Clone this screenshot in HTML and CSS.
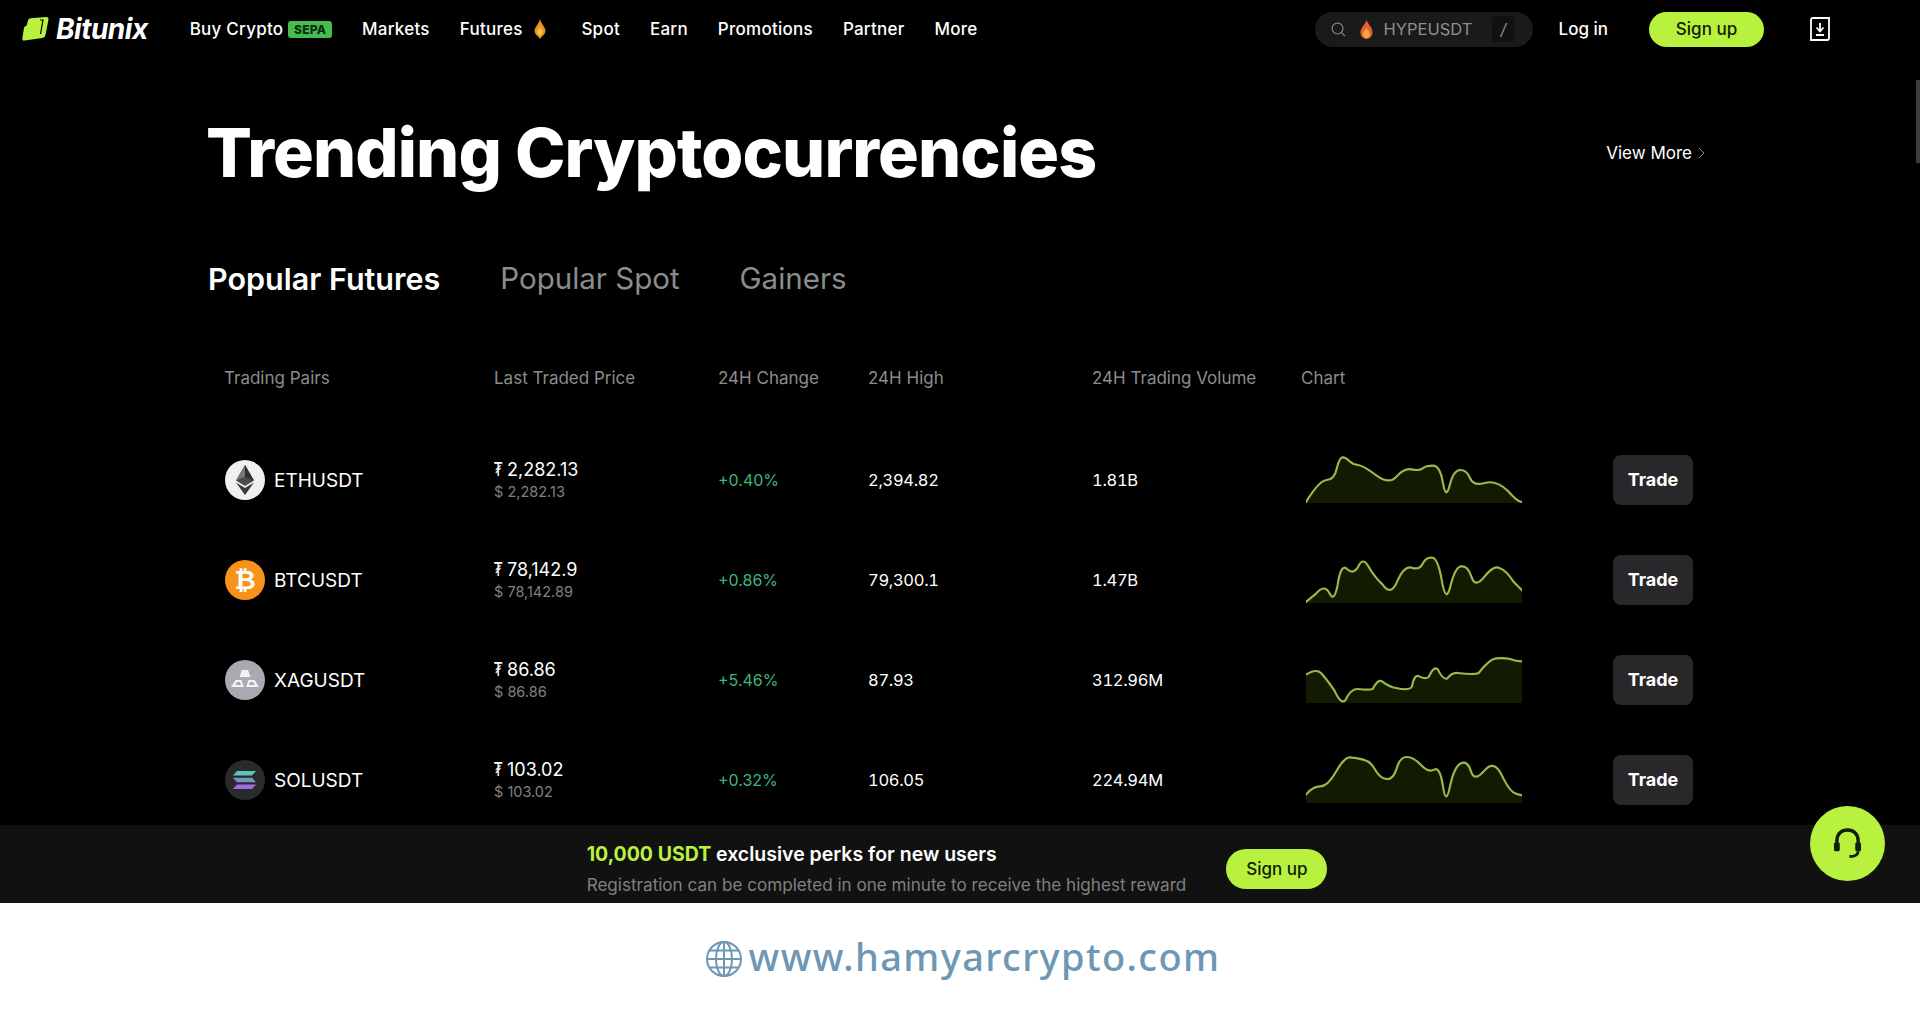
FILE: index.html
```html
<!DOCTYPE html>
<html lang="en">
<head>
<meta charset="utf-8">
<title>Bitunix - Trending Cryptocurrencies</title>
<link rel="stylesheet" href="styles.css">
</head>
<body>
<div class="shot">
  <header class="topbar">
    <a class="logo">
      <svg class="logo-mark" viewBox="0 0 27 24"><path d="M6 3.5 Q6.4 1.5 8.5 1.3 L24 0 Q27 0 26.4 3 L23.5 18 Q23 20.6 20.5 21 L2.5 23.6 Q0 24 .4 21 L2 11 Q2.3 9 4.5 8.7 Z" fill="#b9f13f"/><path d="M18 3 L21 3 L18.5 17" fill="none" stroke="#000" stroke-width="1.2"/></svg>
      <span class="logo-text">Bitunix</span>
    </a>
    <nav class="nav">
      <a class="nav-item">Buy Crypto <span class="sepa">SEPA</span></a>
      <a class="nav-item">Markets</a>
      <a class="nav-item">Futures <svg class="nav-flame" viewBox="0 0 16 22"><path d="M8 0 C9 5 14 9 14 13 C14 17 10 19 8 22 C6 19 2 17 2 13 C2 9 7 5 8 0 Z" fill="#e8941e"/><path d="M8 9 C9 11 11 12 11 14 C11 16 9 17 8 19 C7 17 5 16 5 14 C5 12 7 11 8 9 Z" fill="#f6c64a"/></svg></a>
      <a class="nav-item">Spot</a>
      <a class="nav-item">Earn</a>
      <a class="nav-item">Promotions</a>
      <a class="nav-item">Partner</a>
      <a class="nav-item">More</a>
    </nav>
    <div class="top-right">
      <div class="search">
        <svg class="search-icon" viewBox="0 0 16 16"><circle cx="7" cy="7" r="5.8" fill="none" stroke="#8a8a8a" stroke-width="1.2"/><path d="M11.300 11.300 L15 15" stroke="#8a8a8a" stroke-width="1.2"/></svg>
        <svg class="search-flame" viewBox="0 0 16 22"><path d="M8 0 C9 4 15 8 15 14 C15 19 12 22 8 22 C4 22 1 19 1 14 C1 9 7 5 8 0 Z" fill="#e2622a"/><path d="M8 9 C9 12 12 13 12 16 C12 19 10 21 8 21 C6 21 4 19 4 16 C4 13 7 12 8 9 Z" fill="#f7a64a"/></svg>
        <span class="search-text">HYPEUSDT</span>
        <span class="search-key">/</span>
      </div>
      <a class="login">Log in</a>
      <a class="signup">Sign up</a>
      <svg class="download" viewBox="0 0 20 24"><path d="M1 3 Q1 1 3 1 H19 V21 Q19 23 17 23 H1 Z" fill="none" stroke="#fff" stroke-width="1.800"/><path d="M10 6 V14 M6.500 10.500 L10 14.500 L13.500 10.500 M6 18 H14" fill="none" stroke="#fff" stroke-width="1.800"/></svg>
    </div>
  </header>

  <main class="content">
    <div class="wrap">
      <div class="title-row">
        <h1 class="title">Trending Cryptocurrencies</h1>
        <a class="view-more">View More <svg class="chev" viewBox="0 0 7 12"><path d="M1 1 L6 6 L1 11" fill="none" stroke="#8a8a8a" stroke-width="1"/></svg></a>
      </div>
      <div class="tabs">
        <span class="tab tab-active">Popular Futures</span>
        <span class="tab">Popular Spot</span>
        <span class="tab">Gainers</span>
      </div>
      <div class="thead">
        <span>Trading Pairs</span>
        <span>Last Traded Price</span>
        <span>24H Change</span>
        <span>24H High</span>
        <span>24H Trading Volume</span>
        <span>Chart</span>
      </div>

      <div class="row">
        <div class="pair">
          <svg class="coin" viewBox="0 0 40 40"><circle cx="20" cy="20" r="20" fill="#eef0f1"/><path d="M20 5 L11 20.500 L20 26 L29 20.500 Z" fill="#4a4a4c"/><path d="M20 5 L11 20.500 L20 16.500 Z" fill="#77777a"/><path d="M20 5 L29 20.500 L20 16.500 Z" fill="#2e2e30"/><path d="M11 22.500 L20 35 L29 22.500 L20 28 Z" fill="#3a3a3c"/></svg>
          <span>ETHUSDT</span>
        </div>
        <div class="price"><div class="price-main"><span class="tether">₮</span>2,282.13</div><div class="price-sub">$ 2,282.13</div></div>
        <div class="up">+0.40%</div>
        <div class="val">2,394.82</div>
        <div class="val">1.81B</div>
        <svg class="spark" viewBox="0 0 648 150" preserveAspectRatio="none"><path class="spark-fill" d="M0 147 Q40 82 62 81 Q85 80 92 47 Q100 14 109 13 Q118 12 129 23 Q140 34 156 36 Q172 38 211 67 Q250 96 272 70 Q295 44 317 49 Q340 54 350 46 Q360 38 381 38 Q402 38 411 90 Q420 142 431 97 Q442 52 462 51 Q482 50 492 75 Q502 100 536 90 Q570 80 605 113 Q635 147 648 147 V150 H0 Z"/><path class="spark-line" d="M0 147 Q40 82 62 81 Q85 80 92 47 Q100 14 109 13 Q118 12 129 23 Q140 34 156 36 Q172 38 211 67 Q250 96 272 70 Q295 44 317 49 Q340 54 350 46 Q360 38 381 38 Q402 38 411 90 Q420 142 431 97 Q442 52 462 51 Q482 50 492 75 Q502 100 536 90 Q570 80 605 113 Q635 147 648 147"/></svg>
        <a class="trade">Trade</a>
      </div>

      <div class="row">
        <div class="pair">
          <svg class="coin" viewBox="0 0 40 40"><circle cx="20" cy="20" r="20" fill="#f7931a"/><text x="20" y="29" class="btc-glyph" text-anchor="middle">₿</text></svg>
          <span>BTCUSDT</span>
        </div>
        <div class="price"><div class="price-main"><span class="tether">₮</span>78,142.9</div><div class="price-sub">$ 78,142.89</div></div>
        <div class="up">+0.86%</div>
        <div class="val">79,300.1</div>
        <div class="val">1.47B</div>
        <svg class="spark" viewBox="0 0 648 150" preserveAspectRatio="none"><path class="spark-fill" d="M0 147 L30 122 Q55 92 70 120 Q85 150 95 95 Q105 30 123 48 Q142 66 156 42 Q170 10 187 40 Q205 72 230 95 Q255 132 275 82 Q295 38 317 44 Q340 52 350 32 Q360 12 378 14 Q395 14 407 80 Q420 160 435 92 Q450 38 467 40 Q485 38 496 70 Q507 108 536 70 Q565 34 582 46 Q600 52 624 88 L648 112 V150 H0 Z"/><path class="spark-line" d="M0 147 L30 122 Q55 92 70 120 Q85 150 95 95 Q105 30 123 48 Q142 66 156 42 Q170 10 187 40 Q205 72 230 95 Q255 132 275 82 Q295 38 317 44 Q340 52 350 32 Q360 12 378 14 Q395 14 407 80 Q420 160 435 92 Q450 38 467 40 Q485 38 496 70 Q507 108 536 70 Q565 34 582 46 Q600 52 624 88 L648 112"/></svg>
        <a class="trade">Trade</a>
      </div>

      <div class="row">
        <div class="pair">
          <svg class="coin" viewBox="0 0 40 40"><circle cx="20" cy="20" r="20" fill="#a9a9b1"/><path d="M17 10 H23 L25.500 17 H14.500 Z M10.500 20 H16.500 L19 27 H6 Z M23.500 20 H29.500 L34 27 H21 Z" fill="#f2f2f4"/><path d="M12 22 H15 L16 25 H10.500 Z M25 22 H28 L30 25 H24 Z" fill="#a9a9b1"/></svg>
          <span>XAGUSDT</span>
        </div>
        <div class="price"><div class="price-main"><span class="tether">₮</span>86.86</div><div class="price-sub">$ 86.86</div></div>
        <div class="up">+5.46%</div>
        <div class="val">87.93</div>
        <div class="val">312.96M</div>
        <svg class="spark" viewBox="0 0 648 150" preserveAspectRatio="none"><path class="spark-fill" d="M0 65 Q30 46 45 60 Q60 76 85 112 Q105 156 118 142 Q135 106 155 108 Q190 112 200 108 Q215 78 228 85 Q250 102 270 105 Q312 114 318 100 Q325 62 340 70 Q358 80 368 72 Q385 36 396 50 Q410 80 423 77 Q438 58 455 60 Q505 66 518 60 Q550 18 570 16 Q595 14 612 18 Q630 25 648 25 V150 H0 Z"/><path class="spark-line" d="M0 65 Q30 46 45 60 Q60 76 85 112 Q105 156 118 142 Q135 106 155 108 Q190 112 200 108 Q215 78 228 85 Q250 102 270 105 Q312 114 318 100 Q325 62 340 70 Q358 80 368 72 Q385 36 396 50 Q410 80 423 77 Q438 58 455 60 Q505 66 518 60 Q550 18 570 16 Q595 14 612 18 Q630 25 648 25"/></svg>
        <a class="trade">Trade</a>
      </div>

      <div class="row">
        <div class="pair">
          <svg class="coin" viewBox="0 0 40 40"><circle cx="20" cy="20" r="20" fill="#2a2a2c"/><path d="M12 11 H31 L27 15.500 H8 Z" fill="#5bc6b8"/><path d="M8 17.700 H27 L31 22.200 H12 Z" fill="#7d92c9"/><path d="M12 24.500 H31 L27 29 H8 Z" fill="#9d6fdc"/></svg>
          <span>SOLUSDT</span>
        </div>
        <div class="price"><div class="price-main"><span class="tether">₮</span>103.02</div><div class="price-sub">$ 103.02</div></div>
        <div class="up">+0.32%</div>
        <div class="val">106.05</div>
        <div class="val">224.94M</div>
        <svg class="spark" viewBox="0 0 648 150" preserveAspectRatio="none"><path class="spark-fill" d="M0 125 Q20 100 42.500 100 Q65 100 90 56 Q115 12 132 13 Q150 14 172 20 Q195 26 208 51 Q222 76 242 78 Q262 80 272 46 Q282 12 302 12 Q322 12 345 36 Q368 60 385 50 Q402 40 411 100 Q420 160 432 100 Q445 40 465 31 Q485 22 495 55 Q505 88 535 53 Q565 18 588 68 Q612 118 630 122 Q640 125 648 127 V150 H0 Z"/><path class="spark-line" d="M0 125 Q20 100 42.500 100 Q65 100 90 56 Q115 12 132 13 Q150 14 172 20 Q195 26 208 51 Q222 76 242 78 Q262 80 272 46 Q282 12 302 12 Q322 12 345 36 Q368 60 385 50 Q402 40 411 100 Q420 160 432 100 Q445 40 465 31 Q485 22 495 55 Q505 88 535 53 Q565 18 588 68 Q612 118 630 122 Q640 125 648 127"/></svg>
        <a class="trade">Trade</a>
      </div>
    </div>
    <div class="scrollbar"></div>
  </main>

  <aside class="banner">
    <div class="banner-copy">
      <div class="banner-title"><span class="lime">10,000 USDT</span> exclusive perks for new users</div>
      <div class="banner-sub">Registration can be completed in one minute to receive the highest reward</div>
    </div>
    <a class="banner-btn">Sign up</a>
  </aside>

  <a class="support">
    <svg class="support-icon" viewBox="0 0 30 32"><path d="M4 18 V13 C4 6 9 2 15 2 C21 2 26 6 26 13 V18" fill="none" stroke="#10210a" stroke-width="3.500"/><rect x="1" y="15" width="6" height="9" rx="1.500" fill="#10210a"/><rect x="23" y="15" width="6" height="9" rx="1.500" fill="#10210a"/><path d="M26 24 C26 28 23 29.500 17 29.500" fill="none" stroke="#10210a" stroke-width="3"/></svg>
  </a>

  <footer class="mark">
    <svg class="globe" viewBox="0 0 36 36"><g fill="none" stroke="#6d97b3" stroke-width="2"><circle cx="18" cy="18" r="17"/><ellipse cx="18" cy="18" rx="8" ry="17"/><path d="M18 1 V35 M1 18 H35 M4 9.500 H32 M4 26.500 H32"/></g></svg>
    <span class="mark-text">www.hamyarcrypto.com</span>
  </footer>
</div>
</body>
</html>
```

FILE: styles.css
```css
* { box-sizing: border-box; }
html, body { margin: 0; padding: 0; }
body {
  background: #fff;
  font-family: Inter, "Liberation Sans", sans-serif;
  color: #fff;
  overflow: hidden;
}
a { color: inherit; text-decoration: none; }

.shot {
  position: relative;
  display: flex;
  flex-direction: column;
  height: 1017px;
  overflow: hidden;
}

/* top bar */
.topbar {
  display: flex;
  align-items: center;
  flex: 0 0 56px;
  padding: 2px 90px 0 22px;
  background: #000;
}
.logo { display: flex; align-items: center; gap: 7px; }
.logo-mark { width: 27px; height: 24px; }
.logo-text {
  font-size: 28px;
  font-weight: 700;
  font-style: italic;
  letter-spacing: -0.5px;
}
.nav { display: flex; align-items: center; gap: 30px; margin-left: 42px; }
.nav-item {
  display: flex;
  align-items: center;
  gap: 3px;
  font-size: 17px;
  font-weight: 500;
  letter-spacing: 0.25px;
  white-space: pre;
}
.sepa {
  display: inline-block;
  width: 44px;
  height: 17px;
  margin-left: -3px;
  border-radius: 3px;
  background: #46bb50;
  color: #0c2a10;
  font-size: 12px;
  font-weight: 800;
  line-height: 17px;
  text-align: center;
}
.nav-flame { width: 16px; height: 20px; margin: 0 3px 0 2px; }
.top-right { display: flex; align-items: center; margin-left: auto; }
.search {
  display: flex;
  align-items: center;
  width: 218px;
  height: 35px;
  padding-left: 16px;
  border-radius: 18px;
  background: #1a1a1a;
  color: #8f8f8f;
}
.search-icon { width: 15px; height: 15px; }
.search-flame { width: 15px; height: 19px; margin-left: 13px; }
.search-text { margin-left: 10px; font-size: 16.5px; letter-spacing: 0; }
.search-key {
  width: 22px;
  height: 26px;
  margin-left: 20px;
  border-radius: 4px;
  background: #111;
  font-size: 16px;
  line-height: 26px;
  text-align: center;
  font-style: italic;
}
.login { margin-left: 26px; font-size: 17px; font-weight: 500; }
.signup {
  display: block;
  width: 115px;
  height: 35px;
  margin-left: 41px;
  border-radius: 18px;
  background: #b9f13f;
  color: #142000;
  font-size: 17px;
  font-weight: 500;
  line-height: 35px;
  text-align: center;
}
.download { width: 20px; height: 24px; margin-left: 46px; }

/* content */
.content {
  position: relative;
  flex: 1 1 auto;
  min-height: 0;
  overflow: hidden;
  background: #000;
}
.wrap { width: 1504px; margin: 0 auto; padding-top: 56px; }
.title-row {
  display: flex;
  align-items: center;
  justify-content: space-between;
  height: 80px;
  padding-right: 7px;
}
.title { margin: 0 0 0 -2px; font-size: 68px; font-weight: 800; letter-spacing: -0.9px; line-height: 80px; }
.view-more { display: flex; align-items: center; gap: 6px; margin-top: 2px; font-size: 17px; }
.chev { width: 7px; height: 12px; }
.tabs { display: flex; align-items: center; gap: 60px; height: 40px; margin-top: 66px; }
.tab { font-size: 29.500px; color: #8c8c8c; }
.tab-active { font-size: 30.500px; color: #fff; font-weight: 600; }

.thead, .row {
  display: grid;
  grid-template-columns: 270px 224px 150px 224px 209px 1fr 80px;
  align-items: center;
  padding: 0 19px 0 16px;
}
.thead { height: 40px; margin-top: 60px; font-size: 17px; color: #8c8c8c; }
.row { height: 100px; }
.thead + .row { margin-top: 32px; }

.pair { display: flex; align-items: center; gap: 9px; font-size: 19px; }
.coin { width: 40px; height: 40px; margin-left: 1px; }
.btc-glyph { font-family: "DejaVu Sans", sans-serif; font-size: 26px; font-weight: 700; fill: #fff; }
.price-main { font-size: 18px; line-height: 22px; }
.tether {
  display: inline-block;
  width: 13px;
  font-family: "DejaVu Sans", sans-serif;
  font-size: 20px;
  line-height: 20px;
  transform: scaleX(0.65);
  transform-origin: left center;
}
.price-sub { margin-top: 1px; font-size: 14.5px; line-height: 20px; color: #808080; }
.up { font-size: 16px; color: #3fb57e; }
.val { font-size: 16.5px; font-variant-numeric: tabular-nums; letter-spacing: -0.3px; }
.spark { width: 216px; height: 50px; margin: 0 0 4px 5px; }
.spark-fill { fill: #121a02; stroke: none; }
.spark-line { fill: none; stroke: #9ab94a; stroke-width: 6.5; stroke-linejoin: round; stroke-linecap: round; }
.trade {
  display: block;
  height: 50px;
  border-radius: 8px;
  background: #28282a;
  font-size: 18px;
  font-weight: 700;
  line-height: 50px;
  text-align: center;
}
.scrollbar {
  position: absolute;
  top: 24px;
  right: 0;
  width: 4px;
  height: 83px;
  background: #3c3c3c;
}

/* sign-up banner */
.banner {
  display: flex;
  align-items: center;
  justify-content: center;
  gap: 40px;
  flex: 0 0 78px;
  padding: 11px 6px 0 0;
  background: #111;
}
.banner-title { font-size: 19.500px; font-weight: 600; line-height: 24px; }
.lime { color: #b9f13f; font-weight: 700; }
.banner-sub { margin-top: 7px; font-size: 17.100px; line-height: 24px; color: #808080; }
.banner-btn {
  display: block;
  width: 101px;
  height: 40px;
  margin-bottom: 2px;
  border-radius: 20px;
  background: #b9f13f;
  color: #142000;
  font-size: 17px;
  font-weight: 500;
  line-height: 40px;
  text-align: center;
}
.support {
  position: absolute;
  top: 806px;
  left: 1810px;
  display: flex;
  align-items: center;
  justify-content: center;
  width: 75px;
  height: 75px;
  border-radius: 50%;
  background: #b9f13f;
}
.support-icon { width: 29px; height: 31px; }

/* watermark strip */
.mark {
  display: flex;
  align-items: center;
  justify-content: center;
  gap: 7px;
  flex: 0 0 114px;
  padding-left: 6px;
  padding-bottom: 9px;
  background: #fff;
}
.globe { width: 36px; height: 36px; margin-top: 6px; }
.mark-text {
  color: #6d97b3;
  font-family: "Noto Sans", sans-serif;
  font-size: 38px;
  font-weight: 500;
  letter-spacing: 1.4px;
}
```
